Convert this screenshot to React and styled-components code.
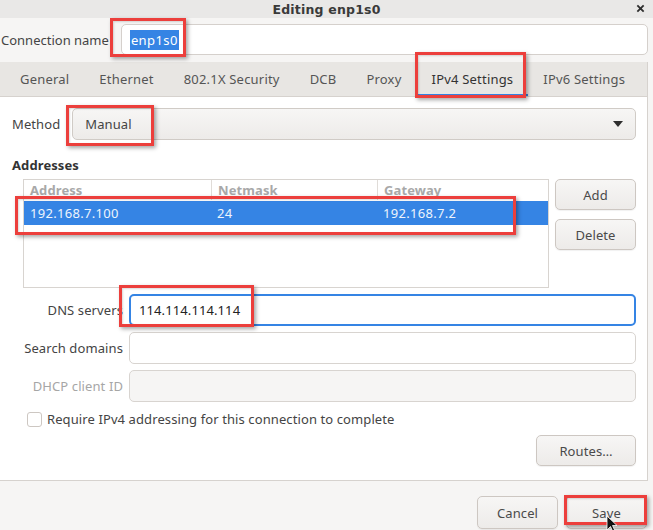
import React from "react";
import styled, { createGlobalStyle } from "styled-components";

const GlobalStyle = createGlobalStyle`
    html, body {
        margin: 0;
        padding: 0;
        background: #f6f5f4;
    }
    * {
        box-sizing: border-box;
    }
`;

const tabs = ["General", "Ethernet", "802.1X Security", "DCB", "Proxy", "IPv4 Settings", "IPv6 Settings"];

// annotation boxes drawn over the screenshot
const marks = [
    { x: 110, y: 18, w: 76, h: 39 },
    { x: 415, y: 52, w: 111, h: 46 },
    { x: 66, y: 105, w: 88, h: 41 },
    { x: 15, y: 196, w: 501, h: 39 },
    { x: 119, y: 285, w: 135, h: 42 },
    { x: 564, y: 495, w: 83, h: 30 },
];

const App = () => {
    return (
        <Window>
            <GlobalStyle />
            <TitleBar>
                <h1>Editing enp1s0</h1>
                <Close viewBox="0 0 10 10">
                    <path d="M1.5 1.5 L8.5 8.5 M8.5 1.5 L1.5 8.5" stroke="#2e2e2e" strokeWidth="2" />
                </Close>
            </TitleBar>
            <NameRow>
                <label>Connection name</label>
                <Entry>
                    <Selected>enp1s0</Selected>
                </Entry>
            </NameRow>
            <Notebook>
                <TabBar>
                    {tabs.map((t) => (
                        <Tab key={t} active={t === "IPv4 Settings"}>{t}</Tab>
                    ))}
                </TabBar>
                <Page>
                    <MethodRow>
                        <label>Method</label>
                        <Combo>
                            <span>Manual</span>
                            <Arrow />
                        </Combo>
                    </MethodRow>
                    <SectionTitle>Addresses</SectionTitle>
                    <AddressArea>
                        <Tree>
                            <TreeHeader>
                                <Col>Address</Col>
                                <Col>Netmask</Col>
                                <Col>Gateway</Col>
                            </TreeHeader>
                            <TreeRow>
                                <Col>192.168.7.100</Col>
                                <Col>24</Col>
                                <Col>192.168.7.2</Col>
                            </TreeRow>
                        </Tree>
                        <ButtonStack>
                            <Button>Add</Button>
                            <Button>Delete</Button>
                        </ButtonStack>
                    </AddressArea>
                    <Form>
                        <FieldLabel>DNS servers</FieldLabel>
                        <Field focused>114.114.114.114</Field>
                        <FieldLabel>Search domains</FieldLabel>
                        <Field />
                        <FieldLabel disabled>DHCP client ID</FieldLabel>
                        <Field disabled />
                    </Form>
                    <CheckRow>
                        <CheckBox />
                        <span>Require IPv4 addressing for this connection to complete</span>
                    </CheckRow>
                    <RoutesRow>
                        <Button width={100}>Routes…</Button>
                    </RoutesRow>
                </Page>
            </Notebook>
            <ActionBar>
                <Button height={33}>Cancel</Button>
                <Button height={33}>Save</Button>
            </ActionBar>
            {marks.map((m, i) => (
                <Mark key={i} style={{ left: m.x, top: m.y, width: m.w, height: m.h }} />
            ))}
            <Cursor viewBox="0 0 12 18">
                <path d="M1 1 L1 15 L4.5 11.5 L7 17 L9 16 L6.5 10.5 L11 10.5 Z" fill="#111" stroke="#fff" strokeWidth="0.8" />
            </Cursor>
        </Window>
    );
};

const Window = styled.div`
    position: relative;
    width: 653px;
    height: 530px;
    overflow: hidden;
    background: #f6f5f4;
    font-family: "Noto Sans", "DejaVu Sans", sans-serif;
    font-size: 13px;
    letter-spacing: 0.1px;
    color: #3d3d3d;
`;

const TitleBar = styled.div`
    height: 18px;
    display: flex;
    align-items: center;
    justify-content: center;
    background: #e9e8e7;
    position: relative;
    h1 {
        margin: 0;
        font-family: "DejaVu Sans", sans-serif;
        font-size: 12.5px;
        font-weight: bold;
        color: #3a3a3a;
        letter-spacing: 0.2px;
    }
`;

const Close = styled.svg`
    position: absolute;
    right: 8px;
    top: 4px;
    width: 9px;
    height: 9px;
`;

const NameRow = styled.div`
    display: flex;
    align-items: center;
    gap: 12px;
    height: 43px;
    padding: 0 5px 0 1px;
    label {
        color: #444;
        letter-spacing: 0;
    }
`;

const Entry = styled.div`
    flex: 1;
    height: 31px;
    display: flex;
    align-items: center;
    padding-left: 8px;
    background: #fff;
    border: 1px solid #d5d0cc;
    border-radius: 5px;
`;

const Selected = styled.span`
    background: #3584e4;
    color: #fff;
    padding: 1px 1px;
    letter-spacing: 0.4px;
`;

const Notebook = styled.div`
    margin-top: 1px;
    width: 648px;
    border-right: 1px solid #d6d2ce;
    border-bottom: 1px solid #d6d2ce;
`;

const TabBar = styled.div`
    display: flex;
    height: 35px;
    padding-left: 5px;
    background: #e8e6e3;
    border-bottom: 1px solid #d6d2ce;
    overflow: hidden;
`;

const Tab = styled.div`
    flex: none;
    display: flex;
    align-items: center;
    white-space: nowrap;
    padding: 0 15px;
    color: ${(p) => (p.active ? "#333" : "#555")};
    box-shadow: ${(p) => (p.active ? "inset 0 -2px 0 #3584e4" : "none")};
    letter-spacing: 0.2px;
`;

const Page = styled.div`
    height: 383px;
    background: #fff;
    padding: 11px 11px 0 12px;
`;

const MethodRow = styled.div`
    display: flex;
    align-items: center;
    gap: 12px;
    label {
        color: #444;
    }
`;

const Combo = styled.div`
    flex: 1;
    height: 32px;
    display: flex;
    align-items: center;
    justify-content: space-between;
    padding: 0 12px 0 12px;
    border: 1px solid #d0cbc6;
    border-radius: 5px;
    background: linear-gradient(#f7f6f5, #edebe9);
    color: #444;
`;

const Arrow = styled.span`
    width: 0;
    height: 0;
    border-left: 5px solid transparent;
    border-right: 5px solid transparent;
    border-top: 6px solid #2e2e2e;
`;

const SectionTitle = styled.div`
    margin: 16px 0 5px;
    font-weight: bold;
    color: #333;
`;

const AddressArea = styled.div`
    display: flex;
    gap: 6px;
    padding-left: 11px;
`;

const Tree = styled.div`
    width: 526px;
    height: 109px;
    border: 1px solid #d8d4d0;
    background: #fff;
`;

const TreeHeader = styled.div`
    display: grid;
    grid-template-columns: 187px 166px 1fr;
    height: 20px;
    align-items: center;
    color: #a8a8a8;
    font-weight: bold;
    & > div + div {
        border-left: 1px solid #e0dcd8;
    }
`;

const TreeRow = styled.div`
    display: grid;
    grid-template-columns: 187px 166px 1fr;
    height: 24px;
    align-items: center;
    margin-top: 1px;
    background: #3584e4;
    color: #eef4fc;
    letter-spacing: 0.3px;
`;

const Col = styled.div`
    padding-left: 6px;
    height: 100%;
    display: flex;
    align-items: center;
`;

const ButtonStack = styled.div`
    display: flex;
    flex-direction: column;
    gap: 9px;
`;

const Button = styled.div`
    width: ${(p) => p.width || 81}px;
    height: ${(p) => p.height || 31}px;
    display: flex;
    align-items: center;
    justify-content: center;
    border: 1px solid #cdc7c2;
    border-radius: 5px;
    background: linear-gradient(#f7f6f5, #edebe9);
    box-shadow: 0 1px 1px rgba(0, 0, 0, 0.06);
    color: #4a4a4a;
`;

const Form = styled.div`
    display: grid;
    grid-template-columns: 111px 1fr;
    column-gap: 6px;
    row-gap: 6px;
    margin-top: 6px;
    align-items: center;
`;

const FieldLabel = styled.div`
    text-align: right;
    white-space: nowrap;
    color: ${(p) => (p.disabled ? "#a6a6a6" : "#444")};
`;

const Field = styled.div`
    height: 32px;
    display: flex;
    align-items: center;
    padding-left: 8px;
    border: ${(p) => (p.focused ? "2px solid #3584e4" : "1px solid #d8d4d0")};
    border-radius: 5px;
    background: ${(p) => (p.disabled ? "#f6f5f4" : "#fff")};
    color: #222;
`;

const CheckRow = styled.div`
    display: flex;
    align-items: center;
    gap: 5px;
    margin: 8px 0 0 15px;
    color: #444;
`;

const CheckBox = styled.span`
    width: 15px;
    height: 15px;
    border: 1px solid #cdc7c2;
    border-radius: 3px;
    background: #fff;
`;

const RoutesRow = styled.div`
    display: flex;
    justify-content: flex-end;
    margin-top: 7px;
`;

const ActionBar = styled.div`
    display: flex;
    justify-content: flex-end;
    gap: 8px;
    padding: 15px 6px 0 0;
`;

const Mark = styled.div`
    position: absolute;
    border: 3px solid #ec3f3c;
    box-shadow: 2px 2px 4px rgba(0, 0, 0, 0.35), inset 1px 1px 2px rgba(0, 0, 0, 0.15);
    pointer-events: none;
`;

const Cursor = styled.svg`
    position: absolute;
    left: 606px;
    top: 515px;
    width: 12px;
    height: 18px;
`;

export default App;
